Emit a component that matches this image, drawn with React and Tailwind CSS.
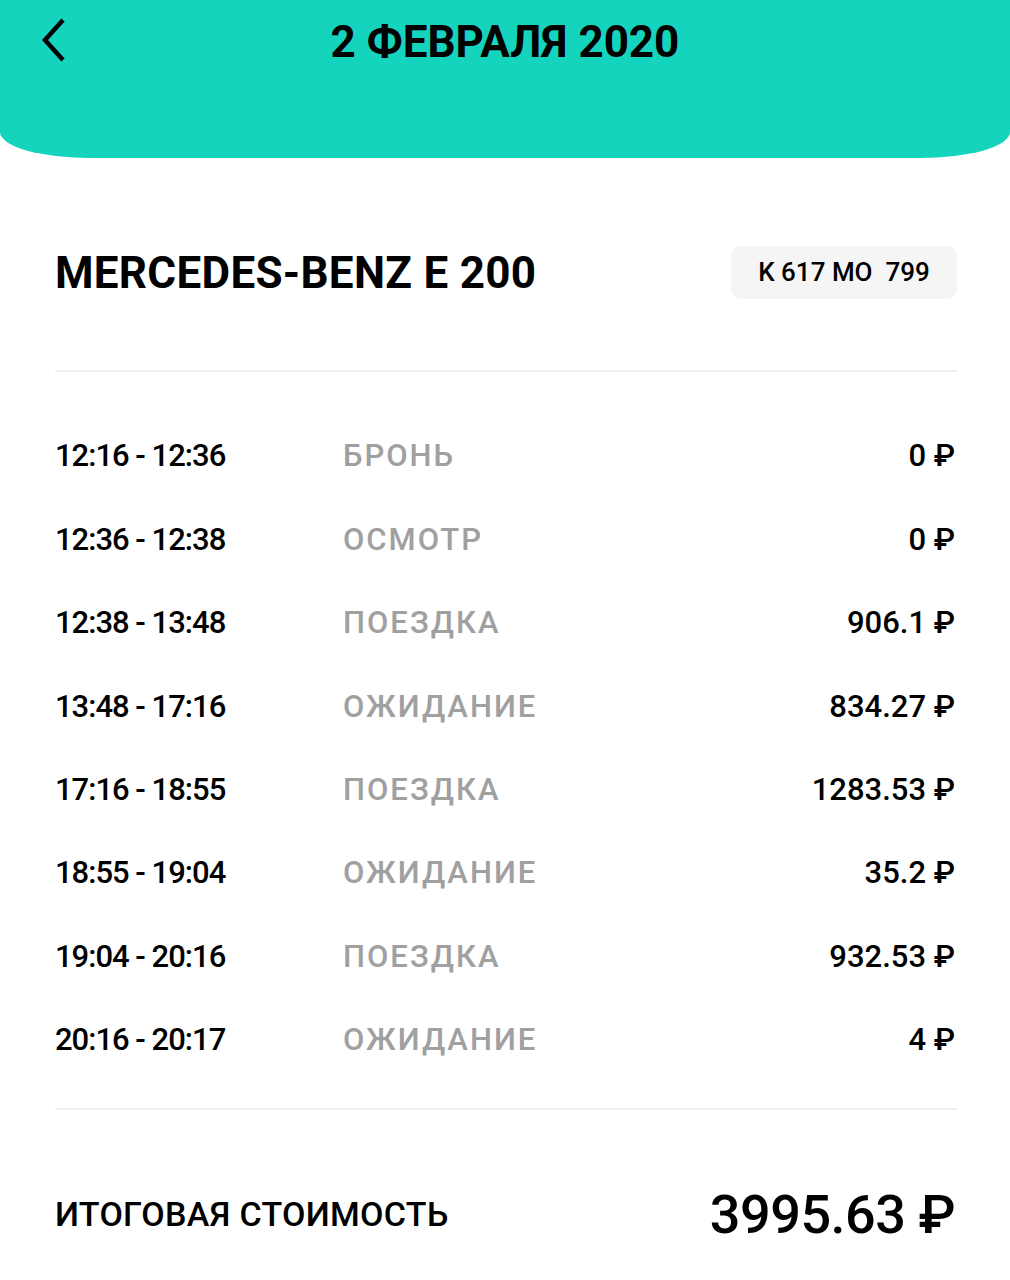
import React from "react";

const rows = [
  { time: "12:16 - 12:36", kind: "БРОНЬ", price: "0 ₽" },
  { time: "12:36 - 12:38", kind: "ОСМОТР", price: "0 ₽" },
  { time: "12:38 - 13:48", kind: "ПОЕЗДКА", price: "906.1 ₽" },
  { time: "13:48 - 17:16", kind: "ОЖИДАНИЕ", price: "834.27 ₽" },
  { time: "17:16 - 18:55", kind: "ПОЕЗДКА", price: "1283.53 ₽" },
  { time: "18:55 - 19:04", kind: "ОЖИДАНИЕ", price: "35.2 ₽" },
  { time: "19:04 - 20:16", kind: "ПОЕЗДКА", price: "932.53 ₽" },
  { time: "20:16 - 20:17", kind: "ОЖИДАНИЕ", price: "4 ₽" },
];

export default function App() {
  return (
    <div
      className="w-[1010px] h-[1280px] bg-white text-black overflow-hidden"
      style={{ fontFamily: "Roboto, 'Liberation Sans', sans-serif" }}
    >
      {/* шапка */}
      <header className="h-[158px] bg-[#15d4be] rounded-b-[90px_26px] grid grid-cols-[1fr_auto_1fr] items-start pt-[18px]">
        <div className="pl-[40px]">
          <svg width="30" height="44" viewBox="0 0 30 44" fill="none">
            <polyline
              points="23,2 5,22 23,42"
              stroke="#000"
              strokeWidth="4.5"
              strokeLinecap="butt"
              strokeLinejoin="miter"
            />
          </svg>
        </div>
        <h1 className="text-[44px] leading-[48px] font-bold">2 ФЕВРАЛЯ 2020</h1>
        <div />
      </header>

      <main className="pl-[55px] pr-[53px]">
        {/* машина */}
        <div className="flex items-center justify-between mt-[88px]">
          <h2 className="text-[44px] font-bold tracking-[0.3px] leading-none">MERCEDES-BENZ E 200</h2>
          <div className="w-[226px] h-[53px] rounded-[10px] bg-[#f5f5f5] flex items-center justify-center text-[26px] font-medium whitespace-pre">
            {"K 617 MO  799"}
          </div>
        </div>

        <div className="h-[2px] bg-[#eeeeee] mt-[71px]" />

        {/* поездки */}
        <div className="mt-[43px]">
          {rows.map((r, i) => (
            <div key={i} className="h-[83.4px] flex items-center text-[31px] font-medium">
              <span className="w-[288px] tracking-[-1px]">{r.time}</span>
              <span className="text-[#a0a0a0] flex-1 tracking-[2px]">{r.kind}</span>
              <span className="pr-[2px]">{r.price}</span>
            </div>
          ))}
        </div>

        <div className="h-[2px] bg-[#eeeeee] mt-[26px]" />

        {/* итого */}
        <div className="h-[104px] mt-[52px] flex items-center justify-between">
          <span className="text-[34px] font-medium tracking-[0.3px]">ИТОГОВАЯ СТОИМОСТЬ</span>
          <span className="text-[54px] font-medium tracking-[-0.5px] pr-[2px]">3995.63 ₽</span>
        </div>
      </main>
    </div>
  );
}
